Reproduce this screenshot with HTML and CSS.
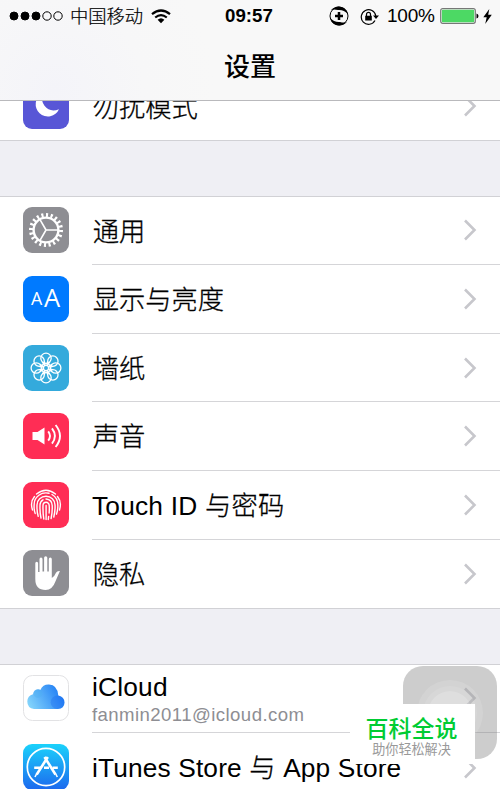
FILE: index.html
```html
<!DOCTYPE html>
<html lang="zh-CN">
<head>
<meta charset="utf-8">
<title>设置</title>
<link rel="stylesheet" href="styles.css">
</head>
<body>
<svg class="defs" aria-hidden="true">
  <defs>
    <symbol id="chevron" viewBox="0 0 14 22"><path d="M2 1.5 11.5 11 2 20.5" fill="none" stroke="#c7c7cc" stroke-width="2.6"/></symbol>
    <linearGradient id="store" x1="0" y1="0" x2="0" y2="1"><stop offset="0" stop-color="#1bd2fb"/><stop offset="1" stop-color="#1c68ee"/></linearGradient>
    <linearGradient id="cloud" gradientUnits="userSpaceOnUse" x1="6" y1="30" x2="36" y2="14"><stop offset="0" stop-color="#82d3fb"/><stop offset="1" stop-color="#2380f5"/></linearGradient>
    <g id="petal"><circle cx="23" cy="13.3" r="5.2"/><path d="M19.4 17Q20.5 19 22 20.4M26.6 17Q25.5 19 24 20.4"/></g>
  </defs>
</svg>
<div class="screen">
  <header class="header">
    <div class="status">
      <svg class="signal" viewBox="0 0 55 12"><g stroke="#000"><circle cx="5" cy="6" r="4"/><circle cx="16" cy="6" r="4"/><circle cx="27" cy="6" r="4"/><g fill="none"><circle cx="38" cy="6" r="4.2"/><circle cx="49" cy="6" r="4.2"/></g></g></svg>
      <span class="carrier">中国移动</span>
      <svg class="wifi" viewBox="0 0 20 15"><g fill="none" stroke="#000" stroke-width="2.2"><path d="M1 5.2Q10-2.2 19 5.2"/><path d="M4.2 8.5Q10 3.6 15.8 8.5"/></g><path d="M6.6 10.8Q10 7.8 13.4 10.8L10 14.2Z"/></svg>
      <span class="time">09:57</span>
      <svg class="sync" viewBox="0 0 20 20"><circle cx="10" cy="10" r="9" fill="none" stroke="#000" stroke-width="1"/><path d="M2 4Q8-2 15 2Q18 4 18.6 8Q15 3.5 9 4Q5 3 2 4ZM1.4 12Q5 16.5 11 16Q15 17 18 16Q12 22 5 18Q2 16 1.4 12Z"/><path d="M10 6v8M6 10h8" stroke="#000" stroke-width="2.5"/></svg>
      <svg class="lock" viewBox="0 0 19 17"><path d="M15 12.5A7.3 7.3 0 1 1 15.8 8" fill="none" stroke="#000" stroke-width="1.2"/><path d="M13 7.5h6l-3 3.6ZM5.2 7.8h6.6v4.8H5.2Z"/><path d="M6.5 8V6.4a2 2 0 0 1 4 0V8" fill="none" stroke="#000" stroke-width="1.2"/></svg>
      <span class="percent">100%</span>
      <svg class="battery" viewBox="0 0 39 16"><rect x=".7" y=".7" width="34.6" height="14.6" rx="2" fill="#fff" stroke="#777" stroke-width="1.2"/><rect x="1.8" y="1.8" width="32.4" height="12.4" rx="1" fill="#4cd964"/><path d="M36.5 5.5Q38.5 6 38.5 8T36.5 10.5Z"/></svg>
      <svg class="bolt" viewBox="0 0 9 15"><path d="M6.3 0 .3 8.2h3.4L2.2 15 8.8 5.8H5.2Z"/></svg>
    </div>
    <h1 class="title">设置</h1>
  </header>

  <main class="list">
    <section class="group group-cut">
      <div class="row">
        <svg class="icon" viewBox="0 0 46 46"><rect width="46" height="46" rx="9" fill="#5856d6"/><path d="M19 10.5A12.2 12.2 0 1 0 36 26.2Q27 29.8 21.5 22.8Q17.6 17 19 10.5Z" fill="#fff"/></svg>
        <div class="body"><span class="label">勿扰模式</span><svg class="chevron"><use href="#chevron"/></svg></div>
      </div>
    </section>

    <section class="group">
      <div class="row">
        <svg class="icon" viewBox="0 0 46 46"><rect width="46" height="46" rx="9" fill="#8e8e93"/><g fill="none" stroke="#fff"><circle cx="23" cy="23" r="12.4" stroke-width="2.4"/><circle cx="23" cy="23" r="15" stroke-width="4" pathLength="80" stroke-dasharray="1.8 2.2"/><path d="M23 23h12M23 23l-6-10.4M23 23l-6 10.4" stroke-width="1.6"/></g></svg>
        <div class="body"><span class="label">通用</span><svg class="chevron"><use href="#chevron"/></svg></div>
      </div>
      <div class="row">
        <svg class="icon" viewBox="0 0 46 46"><rect width="46" height="46" rx="9" fill="#007aff"/><g class="letters"><text x="8" y="29" font-size="17.8">A</text><text x="21" y="31" font-size="25.5">A</text></g></svg>
        <div class="body"><span class="label">显示与亮度</span><svg class="chevron"><use href="#chevron"/></svg></div>
      </div>
      <div class="row">
        <svg class="icon" viewBox="0 0 46 46"><rect width="46" height="46" rx="9" fill="#34aadc"/><g fill="none" stroke="#fff" stroke-width="1.3"><use href="#petal"/><use href="#petal" transform="rotate(45 23 23)"/><use href="#petal" transform="rotate(90 23 23)"/><use href="#petal" transform="rotate(135 23 23)"/><use href="#petal" transform="rotate(180 23 23)"/><use href="#petal" transform="rotate(225 23 23)"/><use href="#petal" transform="rotate(270 23 23)"/><use href="#petal" transform="rotate(315 23 23)"/><circle cx="23" cy="23" r="2.6"/></g></svg>
        <div class="body"><span class="label">墙纸</span><svg class="chevron"><use href="#chevron"/></svg></div>
      </div>
      <div class="row">
        <svg class="icon" viewBox="0 0 46 46"><rect width="46" height="46" rx="9" fill="#ff2d55"/><path d="M9.5 19h5l7-4.6v17.2l-7-4.6h-5Z" fill="#fff"/><g fill="none" stroke="#fff" stroke-width="1.9"><path d="M25.2 18.4Q28.8 23 25.2 27.6"/><path d="M29 15.4Q34.8 23 29 30.6"/><path d="M32.6 12Q41.4 23 32.6 34"/></g></svg>
        <div class="body"><span class="label">声音</span><svg class="chevron"><use href="#chevron"/></svg></div>
      </div>
      <div class="row">
        <svg class="icon" viewBox="0 0 46 46"><rect width="46" height="46" rx="9" fill="#ff2d55"/><g fill="none" stroke="#fff" stroke-width="1.4" stroke-linecap="round"><path d="M13.5 12Q23 4.5 32.5 12"/><path d="M9.5 28Q6.8 20 11.5 14.5M34.5 14.5Q39 20 36.5 28"/><path d="M12.2 31.5Q10.7 28 11.2 22A11.8 11.2 0 0 1 26 11.3M29 12.5Q34.8 15.8 34.8 23 35 28 33.5 32.2"/><path d="M15.2 34.3Q13.8 30 14 23A9 8.7 0 0 1 32 23Q32.3 29 30.8 35"/><path d="M18 36Q16.8 31 17 23.5A6 6.2 0 0 1 20 17.8M23 17Q29 17.5 29.2 23.5 29.5 30 28.1 36.5"/><path d="M20.8 37Q19.8 31 20 23.5A3.1 3.3 0 0 1 26.2 23.5Q26.5 27 26.1 31M25.6 34.5 25.3 37.5M23.1 23.5V37.5"/></g></svg>
        <div class="body"><span class="label label-latin">Touch ID <span class="han">与密码</span></span><svg class="chevron"><use href="#chevron"/></svg></div>
      </div>
      <div class="row">
        <svg class="icon" viewBox="0 0 46 46"><rect width="46" height="46" rx="9" fill="#8e8e93"/><path d="M12.3 13.2q0-1.5 1.4-1.5t1.4 1.5V22h1.4V9.2q0-1.6 1.5-1.6t1.5 1.6V21.5h1.6V7.8q0-1.6 1.6-1.6t1.6 1.6V21.5h1.5V9.2q0-1.6 1.5-1.6t1.5 1.6V28q2.5-1 4.2-5.2 1-2 3.9-1.7L32.4 31.5Q29.4 40 22.6 40 12.3 40 12.3 29Z" fill="#fff"/></svg>
        <div class="body"><span class="label">隐私</span><svg class="chevron"><use href="#chevron"/></svg></div>
      </div>
    </section>

    <section class="group">
      <div class="row">
        <svg class="icon" viewBox="0 0 46 46"><rect x=".5" y=".5" width="45" height="45" rx="9" fill="#fff" stroke="#e2e2e4"/><path d="M11 34Q4.3 33 4.3 26.5 4.5 20.5 10 19.2 10.5 14.5 15 14.2 16.5 14.2 17.3 15 20 9.3 26 9.6 34.5 10 35.3 20.6 41.5 21.8 41.5 27.8 41.3 33.5 35 34Z" fill="url(#cloud)"/><circle cx="15" cy="18.5" r="4.3" fill="#4aafee" opacity=".3"/><circle cx="34.5" cy="27.2" r="6.8" fill="#1765ed" opacity=".3"/></svg>
        <div class="body"><span class="account"><span class="label label-latin">iCloud</span><span class="mail">fanmin2011@icloud.com</span></span><svg class="chevron"><use href="#chevron"/></svg></div>
      </div>
      <div class="row">
        <svg class="icon" viewBox="0 0 46 46"><rect width="46" height="46" rx="9" fill="url(#store)"/><g fill="none" stroke="#fff"><circle cx="23" cy="23" r="18.7" stroke-width="1.7"/><path d="M24.8 13 13.7 30.5M21.5 13 32.5 30.5" stroke-width="2.6"/><path d="M11.2 23.7h7M21 23.7h5M29.5 23.7h5.3" stroke-width="2.4"/><path d="M13.5 30 12 33M32.8 30l1.5 3" stroke-width="1.6"/></g></svg>
        <div class="body"><span class="label label-latin label-store">iTunes Store <span class="han">与</span> App Store</span><svg class="chevron"><use href="#chevron"/></svg></div>
      </div>
    </section>
  </main>

  <div class="assist"><div class="assist-ring"><div class="assist-dot"></div></div></div>
  <div class="badge"><strong class="badge-name">百科全说</strong><span class="badge-note">助你轻松解决</span></div>
</div>
</body>
</html>
```
FILE: styles.css
```css
* { box-sizing: border-box; }
body { margin: 0; font-family: "Liberation Sans", "Noto Sans CJK SC", sans-serif; color: #000; }
.defs { position: absolute; width: 0; height: 0; }
.screen { position: relative; width: 500px; height: 789px; overflow: hidden; background: #efeff4; display: flex; flex-direction: column; }
.header { height: 101px; flex: none; background: radial-gradient(circle at 55px 90px, #f4f4f9 0, #f7f7f8 90px, #f8f8f8 160px); border-bottom: 1px solid #b9b9bc; position: relative; z-index: 1; }
.status { height: 32px; display: flex; align-items: center; padding-left: 9px; }
.status > * { flex: none; }
.signal { width: 55px; height: 12px; }
.carrier { width: 74px; margin-left: 6px; font-size: 18.3px; font-weight: 300; font-family: "Noto Sans CJK SC", sans-serif; line-height: 31px; margin-top: -2px; -webkit-text-stroke: .2px #000; }
.wifi { width: 20px; height: 15px; margin-left: 7px; }
.time { width: 50px; margin-left: 54px; font-size: 18.7px; font-weight: 700; }
.sync { width: 20px; height: 20px; margin-left: 54px; }
.lock { width: 19px; height: 17px; margin-left: 11px; }
.percent { width: 48px; margin-left: 8px; font-size: 19px; letter-spacing: -.2px; white-space: nowrap; }
.battery { width: 39px; height: 16px; margin-left: 5px; }
.bolt { width: 9px; height: 15px; margin-left: 4px; }
.title { margin: 0; height: 66px; line-height: 66px; text-align: center; font-family: "Noto Sans CJK SC", sans-serif; font-size: 26px; font-weight: 500; }
.list { flex: none; }
.group { background: #fff; border: solid #d1d1d5; border-width: 1px 0; margin-bottom: 54.5px; }
.group-cut { margin-top: -30.5px; }
.group-cut .icon, .group-cut .label, .group-cut .chevron { margin-top: 1px; }
.row { display: flex; align-items: center; height: 68.6px; padding-left: 23px; }
.icon { width: 46px; height: 46px; flex: none; margin: -1px 23px 0 0; }
.body { flex: 1; height: 100%; display: flex; align-items: center; justify-content: space-between; padding-right: 23px; border-bottom: 1px solid #d5d5d8; }
.row:last-child .body { border-bottom: 0; }
.label { font-family: "Noto Sans CJK SC", sans-serif; font-weight: 300; font-size: 26.3px; line-height: 36px; margin-top: -1.5px; padding-left: .7px; white-space: nowrap; -webkit-text-stroke: .3px #000; }
.label-latin { font-family: "Liberation Sans", "Noto Sans CJK SC", sans-serif; letter-spacing: .2px; margin-top: 2px; padding-left: 0; -webkit-text-stroke: 0; }
.label-store { letter-spacing: .14px; margin-top: 0; }
.han { -webkit-text-stroke: .3px #000; }
.chevron { width: 14px; height: 22px; flex: none; margin-top: 0; }
.letters { fill: #fff; font-family: "Open Sans", sans-serif; }
.account { display: flex; flex-direction: column; margin-top: 0; }
.account .label { line-height: 30px; }
.mail { font-size: 18.6px; line-height: 25px; color: #8e8e93; letter-spacing: .42px; }
.assist { position: absolute; z-index: 2; left: 403px; top: 666px; width: 94px; height: 93px; border-radius: 20px; background: rgba(125, 125, 125, .39); display: flex; align-items: center; justify-content: center; }
.assist-ring { width: 66px; height: 66px; border-radius: 50%; background: rgba(255, 255, 255, .13); display: flex; align-items: center; justify-content: center; }
.assist-dot { width: 44px; height: 44px; border-radius: 50%; background: rgba(255, 255, 255, .25); box-shadow: 0 0 0 5px rgba(255, 255, 255, .1); }
.badge { position: absolute; z-index: 3; left: 350px; top: 704px; width: 125px; height: 60px; background: #fff; display: flex; flex-direction: column; align-items: center; font-family: "Noto Sans CJK SC", sans-serif; padding-right: 2px; }
.badge-name { color: #0c3; font-size: 23px; line-height: 30px; font-weight: 500; margin-top: 8px; }
.badge-note { color: #999; font-size: 13.1px; line-height: 14px; }
```
